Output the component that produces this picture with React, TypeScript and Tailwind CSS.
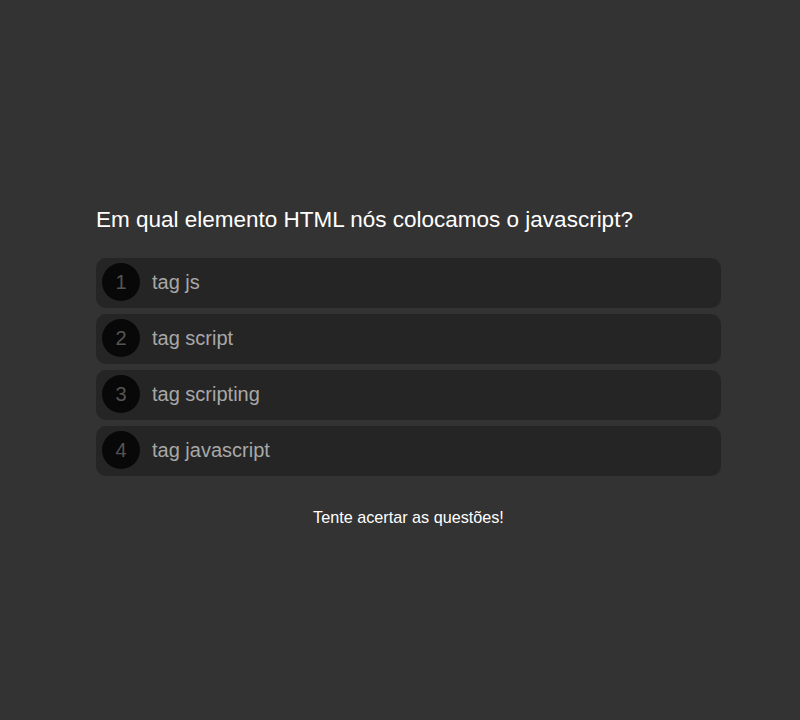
export default function App() {
  const opts = ["tag js", "tag script", "tag scripting", "tag javascript"];
  return (
    <div className="min-h-[720px] w-full bg-[#333333] pt-[204px] pl-[96px]" style={{ fontFamily: '"Liberation Sans", Arial, sans-serif' }}>
      <div className="w-[625px] flex flex-col">
        <h1 className="text-[22.5px] leading-[31px] text-white">Em qual elemento HTML nós colocamos o javascript?</h1>
        <div className="mt-[23px] flex flex-col gap-[6px]">
          {opts.map((o, i) => (
            <div key={o} className="h-[50px] rounded-[10px] bg-[#252525] flex items-center pl-[6px] pb-[2px]">
              <div className="w-[38px] h-[38px] rounded-full bg-[#080808] flex items-center justify-center text-[20px] text-[#555555]">{i + 1}</div>
              <span className="ml-[12px] text-[20px] text-[#a8a8a8]">{o}</span>
            </div>
          ))}
        </div>
        <p className="mt-[31px] text-center text-[16.2px] leading-[20px] text-white">Tente acertar as questões!</p>
      </div>
    </div>
  );
}
